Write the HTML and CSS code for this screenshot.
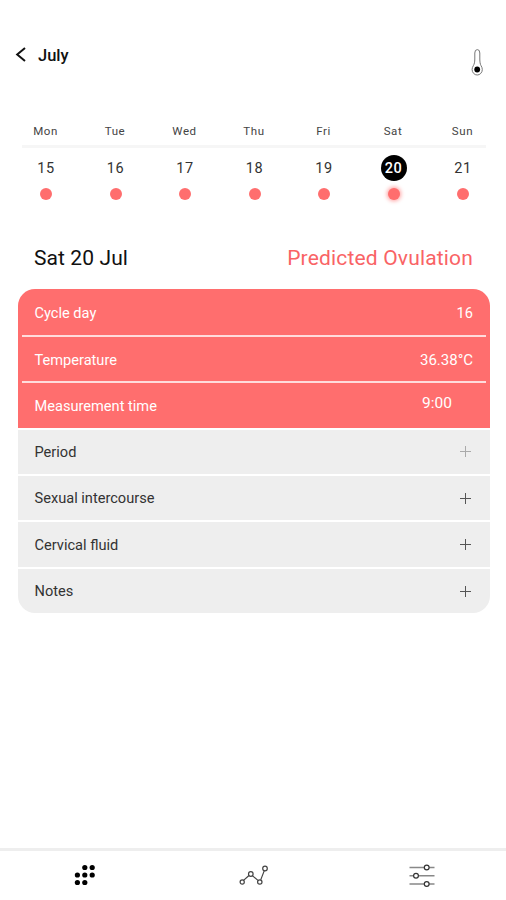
FILE: index.html
```html
<!DOCTYPE html>
<html lang="en">
<head>
  <meta charset="UTF-8" />
  <meta name="viewport" content="width=device-width, initial-scale=1.0"/>
  <title>Cycle Calendar</title>
  <link rel="stylesheet" href="styles.css">
</head>
<body>

<header>
  <div class="back">
    <svg width="12" height="16" viewBox="0 0 12 16"><path d="M10 1L2.200 7.500L10 14" fill="none" stroke="#111" stroke-width="2"/></svg>
    <span class="month">July</span>
  </div>
  <svg class="thermometer" width="14" height="30" viewBox="0 0 14 30">
    <path d="M4.800 11V5a2.500 3.400 0 0 1 5 0v6c0 3 .4 5 1.200 6.600.8 1.200 1.300 2.500 1.300 3.900a5.100 5.500 0 0 1-10.200 0c0-1.400.5-2.700 1.300-3.900.9-1.600 1.400-3.600 1.400-6.600z" fill="none" stroke="#777" stroke-width="1"/>
    <circle cx="7.200" cy="21.500" r="2.900" fill="#000"/>
  </svg>
</header>

<section class="calendar">
  <div class="week names">
    <span>Mon</span><span>Tue</span><span>Wed</span><span>Thu</span><span>Fri</span><span>Sat</span><span>Sun</span>
  </div>
  <div class="week days">
    <div class="day"><span class="number">15</span><i class="dot"></i></div>
    <div class="day"><span class="number">16</span><i class="dot"></i></div>
    <div class="day"><span class="number">17</span><i class="dot"></i></div>
    <div class="day"><span class="number">18</span><i class="dot"></i></div>
    <div class="day"><span class="number">19</span><i class="dot"></i></div>
    <div class="day selected"><span class="number">20</span><i class="dot"></i></div>
    <div class="day"><span class="number">21</span><i class="dot"></i></div>
  </div>
</section>

<div class="title">
  <h1>Sat 20 Jul</h1>
  <h2>Predicted Ovulation</h2>
</div>

<main class="card">
  <div class="filled">
    <div class="row"><span>Cycle day</span><span>16</span></div>
    <div class="row"><span>Temperature</span><span class="degrees">36.38°C</span></div>
    <div class="row"><span>Measurement time</span><span class="time">9:00</span></div>
  </div>
  <div class="row empty muted"><span>Period</span><svg class="plus" width="13" height="13" viewBox="0 0 13 13"><path d="M6.500 1v11M1 6.500h11"/></svg></div>
  <div class="row empty"><span>Sexual intercourse</span><svg class="plus" width="13" height="13" viewBox="0 0 13 13"><path d="M6.500 1v11M1 6.500h11"/></svg></div>
  <div class="row empty"><span>Cervical fluid</span><svg class="plus" width="13" height="13" viewBox="0 0 13 13"><path d="M6.500 1v11M1 6.500h11"/></svg></div>
  <div class="row empty"><span>Notes</span><svg class="plus" width="13" height="13" viewBox="0 0 13 13"><path d="M6.500 1v11M1 6.500h11"/></svg></div>
</main>

<nav>
  <a>
    <svg width="30" height="30" viewBox="0 0 30 30">
      <circle cx="15.800" cy="7.500" r="2.600"/><circle cx="23.200" cy="7.500" r="2.600"/>
      <circle cx="8.400" cy="15" r="2.600"/><circle cx="15.800" cy="15" r="2.600"/><circle cx="23.200" cy="15" r="2.600"/>
      <circle cx="8.400" cy="22.500" r="2.600"/><circle cx="15.800" cy="22.500" r="2.600"/>
    </svg>
  </a>
  <a>
    <svg width="30" height="30" viewBox="0 0 30 30" fill="none" stroke="#444" stroke-width="1.200">
      <path d="M5.500 20.400L11 15.500M14.300 15.600L20 20.400M22.700 19.900L26.200 10.900"/>
      <circle cx="4.200" cy="22" r="2.100"/><circle cx="12.800" cy="14" r="2.300"/>
      <circle cx="21.800" cy="22" r="2.200"/><circle cx="27" cy="8.500" r="2.300"/>
    </svg>
  </a>
  <a>
    <svg width="30" height="30" viewBox="0 0 30 30" fill="none">
      <path d="M2.500 7.500H27.500M2.500 15.700H27.500M2.500 24H27.500" stroke="#888" stroke-width="1.400"/>
      <g fill="#fff" stroke="#333" stroke-width="1.200"><circle cx="19.700" cy="7.500" r="2.400"/><circle cx="9" cy="15.700" r="2.400"/><circle cx="19.700" cy="24" r="2.400"/></g>
    </svg>
  </a>
</nav>

</body>
</html>
```
FILE: styles.css
```css
* {
  box-sizing: border-box;
}

body {
  margin: 0;
  height: 900px;
  display: flex;
  flex-direction: column;
  font-family: Roboto, sans-serif;
  background: #fff;
  color: #222;
}

header {
  height: 114px;
  padding: 46px 22px 0 15px;
  display: flex;
  justify-content: space-between;
  align-items: flex-start;
}

.back {
  display: flex;
  align-items: center;
  gap: 11px;
  height: 18px;
}

.month {
  font-size: 16.5px;
  font-weight: 500;
  color: #111;
}

.thermometer {
  margin-top: 2px;
}

.week {
  display: grid;
  grid-template-columns: repeat(7, 69.5px);
  justify-content: center;
  text-align: center;
}

.names {
  margin: 0 20px 0 22px;
  padding: 9px 0 0;
  height: 34px;
  border-bottom: 3px solid #f6f6f6;
  font-size: 11.5px;
  line-height: 17px;
  letter-spacing: 0.6px;
  color: #444;
}

.days {
  margin: 0 8px 0 11px;
  padding-top: 7px;
}

.day {
  display: flex;
  flex-direction: column;
  align-items: center;
}

.number {
  width: 26px;
  height: 26px;
  line-height: 27px;
  border-radius: 50%;
  font-size: 14.5px;
  letter-spacing: 0.5px;
  color: #333;
}

.dot {
  width: 12px;
  height: 12px;
  margin-top: 7px;
  border-radius: 50%;
  background: #ff6e6e;
}

.selected .number {
  background: #000;
  color: #fff;
  font-weight: 500;
}

.selected .dot {
  box-shadow: 0 0 4px 1px #ff9c9c;
}

.title {
  display: flex;
  justify-content: space-between;
  align-items: center;
  height: 30px;
  margin-top: 43px;
  padding: 0 33px 0 34px;
}

h1,
h2 {
  margin: 0;
  font-size: 21px;
  font-weight: 400;
}

h1 {
  letter-spacing: 0.1px;
  color: #111;
}

h2 {
  letter-spacing: 0.17px;
  color: #f96365;
}

.card {
  margin: 15.5px 16px 0 17.5px;
  border-radius: 17px;
  overflow: hidden;
}

.filled {
  background: #ff6e6e;
  color: #fff;
  padding: 0 4px;
}

.row {
  display: flex;
  justify-content: space-between;
  align-items: center;
  height: 46.4px;
  padding: 0 17px;
  font-size: 14.6px;
}

.filled .row {
  padding: 2px 13px 0;
}

.filled .row + .row {
  padding-top: 1px;
  border-top: 2px solid #ffdcdc;
}

.degrees {
  font-size: 15px;
}

.time {
  margin: -6px 21px 0 0;
  font-size: 15.5px;
}

.empty {
  background: #eee;
  border-top: 2.5px solid #fff;
  color: #333;
}

.plus {
  fill: none;
  stroke: #555;
  stroke-width: 1;
  margin-right: 1px;
}

.muted .plus {
  stroke: #aaa;
}

nav {
  display: grid;
  grid-template-columns: repeat(3, 1fr);
  margin-top: auto;
  height: 52px;
  border-top: 3px solid #eee;
}

nav a {
  display: flex;
  justify-content: center;
  padding-top: 9px;
}
```
